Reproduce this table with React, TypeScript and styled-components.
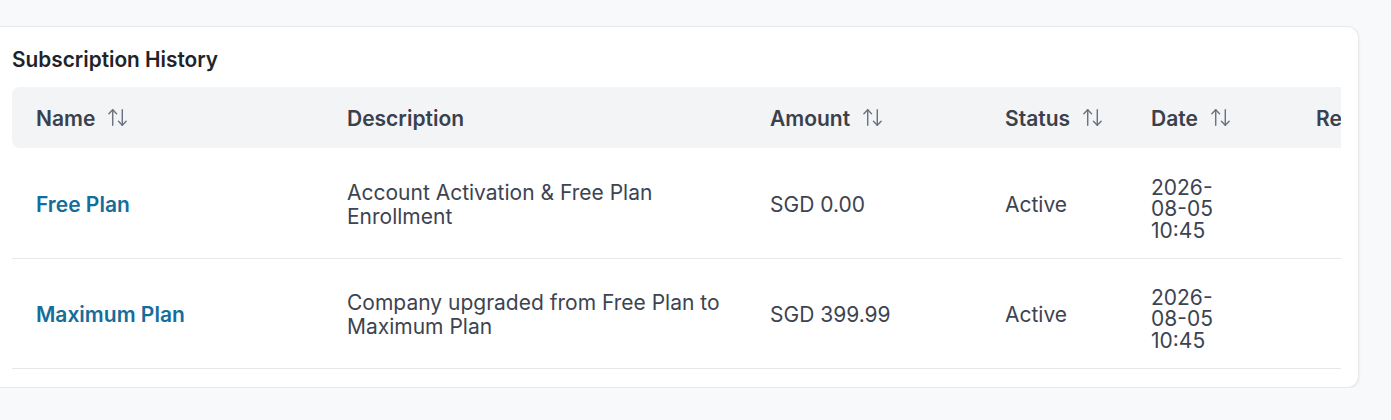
import React from "react";
import styled, { createGlobalStyle } from "styled-components";
import { ArrowUpDown } from "lucide-react";

const GlobalStyle = createGlobalStyle`
  body {
    margin: 0;
    background: #f8f9fb;
    font-family: Inter, "Noto Sans", sans-serif;
    overflow: hidden;
  }
`;

const StPage = styled.main`
  padding: 26px 32px 0 0;
`;

const StCard = styled.section`
  width: 1359px;
  box-sizing: border-box;
  background: #ffffff;
  border: 1px solid #e7e9ed;
  border-left: none;
  border-radius: 0 12px 12px 0;
  box-shadow: 0 1px 3px rgba(16, 24, 40, 0.08);
  padding: 11px 17px 18px 12px;
`;

const StTitle = styled.h2`
  margin: 10px 0 15px;
  font-size: 20.8px;
  line-height: 24px;
  font-weight: 600;
  color: #1f2329;
`;

const StScroller = styled.div`
  width: 1329px;
  overflow: hidden;
`;

const StTable = styled.table`
  width: 1500px;
  table-layout: fixed;
  border-collapse: collapse;
  font-size: 21px;
  color: #3d4350;
`;

const StHeadCell = styled.th<{ $width?: number }>`
  box-sizing: border-box;
  width: ${(p) => (p.$width ? `${p.$width}px` : "auto")};
  height: 61px;
  padding: 2px 24px 0;
  background: #f3f4f6;
  text-align: left;
  font-weight: 600;
  color: #3a404c;
  white-space: nowrap;
  &:first-child {
    border-radius: 8px 0 0 8px;
  }
`;

const StHeadLabel = styled.span`
  display: inline-flex;
  align-items: center;
  gap: 11px;
  svg {
    color: #6b7280;
    margin-top: -3px;
  }
`;

const StRow = styled.tr`
  border-bottom: 1px solid #e6e8eb;
`;

const StCell = styled.td`
  box-sizing: border-box;
  height: 110px;
  padding: 4px 24px 0;
  vertical-align: middle;
  line-height: 24px;
`;

const StPlanName = styled.span`
  color: #156d9c;
  font-weight: 600;
`;

const StDate = styled.span`
  display: block;
  width: 66px;
  margin-top: 8px;
  line-height: 21.5px;
`;

type Column = { label: string; width?: number; sortable: boolean };

const columns: Column[] = [
  { label: "Name", width: 311, sortable: true },
  { label: "Description", width: 423, sortable: false },
  { label: "Amount", width: 235, sortable: true },
  { label: "Status", width: 146, sortable: true },
  { label: "Date", width: 165, sortable: true },
  { label: "Receipt", sortable: false },
];

const rows = [
  {
    name: "Free Plan",
    description: "Account Activation & Free Plan Enrollment",
    amount: "SGD 0.00",
    status: "Active",
    date: "2026-08-05 10:45",
  },
  {
    name: "Maximum Plan",
    description: "Company upgraded from Free Plan to Maximum Plan",
    amount: "SGD 399.99",
    status: "Active",
    date: "2026-08-05 10:45",
  },
];

function App() {
  return (
    <StPage>
      <GlobalStyle />
      <StCard>
        <StTitle>Subscription History</StTitle>
        <StScroller>
          <StTable>
            <thead>
              <tr>
                {columns.map((col) => (
                  <StHeadCell key={col.label} $width={col.width}>
                    <StHeadLabel>
                      {col.label}
                      {col.sortable && <ArrowUpDown size={23} strokeWidth={1.5} />}
                    </StHeadLabel>
                  </StHeadCell>
                ))}
              </tr>
            </thead>
            <tbody>
              {rows.map((row) => (
                <StRow key={row.name}>
                  <StCell>
                    <StPlanName>{row.name}</StPlanName>
                  </StCell>
                  <StCell>{row.description}</StCell>
                  <StCell>{row.amount}</StCell>
                  <StCell>{row.status}</StCell>
                  <StCell>
                    <StDate>{row.date}</StDate>
                  </StCell>
                  <StCell />
                </StRow>
              ))}
            </tbody>
          </StTable>
        </StScroller>
      </StCard>
    </StPage>
  );
}

export default App;
